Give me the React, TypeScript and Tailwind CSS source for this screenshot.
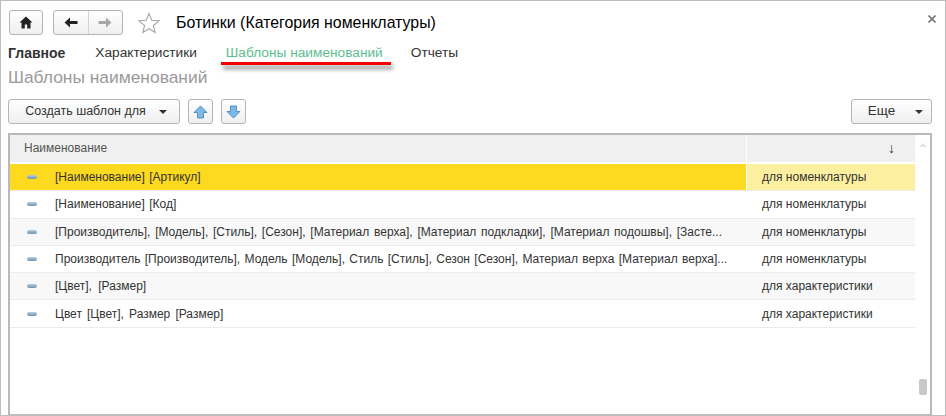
const rows = [
  { name: "[Наименование] [Артикул]", kind: "для номенклатуры", spacing: "[word-spacing:1px]" },
  { name: "[Наименование] [Код]", kind: "для номенклатуры", spacing: "[word-spacing:1px]" },
  { name: "[Производитель], [Модель], [Стиль], [Сезон], [Материал верха], [Материал подкладки], [Материал подошвы], [Засте...", kind: "для номенклатуры", spacing: "[word-spacing:1.4px]" },
  { name: "Производитель [Производитель], Модель [Модель], Стиль [Стиль], Сезон [Сезон], Материал верха [Материал верха]...", kind: "для номенклатуры", spacing: "[word-spacing:1px]" },
  { name: "[Цвет], [Размер]", kind: "для характеристики", spacing: "[word-spacing:3px]" },
  { name: "Цвет [Цвет], Размер [Размер]", kind: "для характеристики", spacing: "[word-spacing:1.8px]" },
];

const btn = "flex items-center justify-center rounded-[3px] border border-[#b4b4b4] bg-gradient-to-b from-white to-[#efefef]";

function Caret() {
  return <span className="h-0 w-0 border-x-[4px] border-t-[4px] border-x-transparent border-t-[#333]" />;
}

function ArrowBtn({ down }: { down?: boolean }) {
  return (
    <button className={`${btn} h-[25px] w-[25px]`}>
      <svg width="15" height="14" viewBox="0 0 15 14" className={down ? "rotate-180" : ""}>
        <path d="M7.5 1 14 7.5H10.5V13H4.5V7.5H1Z" fill="#7db9e8" stroke="#5a8fb8" strokeWidth="1" />
      </svg>
    </button>
  );
}

function Row({ name, kind, spacing, index }: { name: string; kind: string; spacing: string; index: number }) {
  const selected = index === 0;
  const bg = index % 2 === 0 ? "bg-[#f8f8f8]" : "bg-white";
  return (
    <div className={`flex h-[27.3px] border-b border-[#ececec] ${selected ? "bg-white" : bg}`}>
      <div className={`flex w-[736px] shrink-0 items-center ${selected ? "bg-[#fdd91f]" : ""}`}>
        <span className="ml-[17px] h-[4px] w-[10px] shrink-0 rounded-[2px] bg-gradient-to-b from-[#b9cfe0] to-[#6f93ad]" />
        <span className={`ml-[18px] whitespace-nowrap text-[12px] text-[#333] ${spacing}`}>{name}</span>
      </div>
      <div className={`ml-px flex flex-1 items-center pl-[15px] text-[12px] text-[#333] ${selected ? "bg-[#fcf0a0]" : ""}`}>
        {kind}
      </div>
    </div>
  );
}

export default function App() {
  return (
    <div className="flex h-[416px] w-[946px] flex-col overflow-hidden border border-[#bdbdbd] bg-white font-['Liberation_Sans',Arial,sans-serif] text-[#333]">
      {/* шапка */}
      <header className="flex h-[35px] items-center pl-[8px] pr-[9px] pt-[8px]">
        <button className={`${btn} h-[25px] w-[34px]`}>
          <svg width="14" height="13" viewBox="0 0 14 13" fill="#222">
            <path d="M7 0.5 0.5 6.5H2.5V12.5H5.8V8.5H8.2V12.5H11.5V6.5H13.5Z" />
          </svg>
        </button>
        <div className={`${btn} ml-[10px] h-[25px] w-[70px]`}>
          <span className="flex h-full flex-1 items-center justify-center border-r border-[#d2d2d2]">
            <svg width="14" height="11" viewBox="0 0 14 11" fill="#222"><path d="M0.5 5.5 6 0.5V4H13.5V7H6V10.5Z" /></svg>
          </span>
          <span className="flex h-full flex-1 items-center justify-center">
            <svg width="14" height="11" viewBox="0 0 14 11" fill="#a8a8a8"><path d="M13.5 5.5 8 0.5V4H0.5V7H8V10.5Z" /></svg>
          </span>
        </div>
        <svg width="24" height="24" viewBox="0 0 24 24" className="ml-[14px]" fill="none" stroke="#a6a6a6" strokeWidth="1.1">
          <path d="M12 2.5 14.8 9.3 22 9.8 16.4 14.5 18.2 21.5 12 17.7 5.8 21.5 7.6 14.5 2 9.8 9.2 9.3Z" />
        </svg>
        <h1 className="ml-[15px] text-[15.9px] leading-none text-black">Ботинки (Категория номенклатуры)</h1>
        <button className="mb-[7px] ml-auto">
          <svg width="8" height="8" viewBox="0 0 8 8" stroke="#777" strokeWidth="1.6"><path d="M0.5 0.5 7.5 7.5M7.5 0.5 0.5 7.5" /></svg>
        </button>
      </header>

      {/* закладки */}
      <nav className="mt-[9px] flex h-[17px] items-center pl-[7px] text-[13.7px]">
        <span className="text-[14px] font-bold">Главное</span>
        <span className="ml-[30px]">Характеристики</span>
        <span className="relative ml-[29px] text-[#5dbd8e]">
          Шаблоны наименований
          <span className="absolute -left-[5px] -right-[8px] top-[19px] h-[3px] bg-[#f00000] shadow-[2px_4px_4px_rgba(0,0,0,0.5)]" />
        </span>
        <span className="ml-[28px]">Отчеты</span>
      </nav>

      <div className="mt-[5px] pl-[7px] text-[17.4px] leading-[20px] text-[#9a9a9a]">Шаблоны наименований</div>

      {/* командная панель */}
      <div className="mt-[12px] flex h-[25px] items-center pl-[7px] pr-[13px]">
        <button className={`${btn} h-[25px] w-[172px] gap-[13px] pl-[4px] text-[12.5px]`}>
          <span>Создать шаблон для</span>
          <Caret />
        </button>
        <span className="ml-[8px]"><ArrowBtn /></span>
        <span className="ml-[8px]"><ArrowBtn down /></span>
        <button className={`${btn} ml-auto h-[25px] w-[81px] gap-[20px] pl-[8px] text-[13.5px]`}>
          <span>Еще</span>
          <Caret />
        </button>
      </div>

      {/* таблица */}
      <div className="ml-[7px] mr-[13px] mt-[9px] flex min-h-0 flex-1 border-x-2 border-t-2 border-b border-[#b9b9b9]">
        <div className="min-w-0 flex-1">
          <div className="flex h-[29px] border-b-2 border-white bg-[#f0f0f0] text-[12px] text-[#555]">
            <div className="flex w-[736px] shrink-0 items-center pb-[2px] pl-[14px]">Наименование</div>
            <div className="flex flex-1 items-center justify-end border-l border-white pr-[20px] text-[14px] text-[#333]">↓</div>
          </div>
          {rows.map((row, i) => (
            <Row key={row.name} name={row.name} kind={row.kind} spacing={row.spacing} index={i} />
          ))}
        </div>
        <div className="flex w-[15px] shrink-0 flex-col items-center pt-[8px]">
          <span className="h-0 w-0 border-x-[4px] border-b-[4px] border-x-transparent border-b-[#e4e4e4]" />
          <span className="mb-[19px] mt-auto h-[16px] w-[8px] rounded-[2px] bg-[#c8c8c8]" />
        </div>
      </div>
    </div>
  );
}
